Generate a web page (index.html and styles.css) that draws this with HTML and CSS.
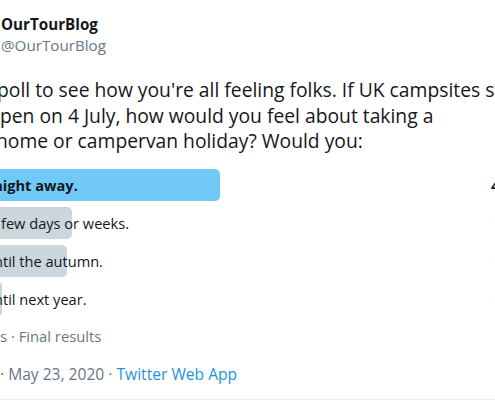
FILE: index.html
```html
<!DOCTYPE html>
<html lang="en">
<head>
<meta charset="utf-8">
<title>OurTourBlog poll</title>
<link rel="stylesheet" href="styles.css">
</head>
<body>
<div class="tweet">
  <div class="author">
    <div class="name">OurTourBlog</div>
    <div class="handle">@OurTourBlog</div>
  </div>
  <div class="text">
    <div class="line l1">poll to see how you're all feeling folks. If UK campsites start to</div>
    <div class="line l2">pen on 4 July, how would you feel about taking a</div>
    <div class="line l3">home or campervan holiday? Would you:</div>
  </div>
  <div class="poll">
    <div class="row">
      <div class="option">
        <div class="bar win" style="width: 220px"></div>
        <div class="label bold cut-a">aight away.</div>
      </div>
      <div class="pct bold">45%</div>
    </div>
    <div class="row">
      <div class="option">
        <div class="bar" style="width: 72px"></div>
        <div class="label cut-f">few days or weeks.</div>
      </div>
      <div class="pct light">12%</div>
    </div>
    <div class="row">
      <div class="option">
        <div class="bar" style="width: 67px"></div>
        <div class="label cut-n">ntil the autumn.</div>
      </div>
      <div class="pct light">11%</div>
    </div>
    <div class="row">
      <div class="option">
        <div class="bar" style="width: 2px"></div>
        <div class="label cut-n">ntil next year.</div>
      </div>
      <div class="pct light">1%</div>
    </div>
  </div>
  <div class="meta">s · Final results</div>
  <div class="time"><span>· May 23, 2020 · </span><a class="app" href="#">Twitter Web App</a></div>
</div>
</body>
</html>
```

FILE: styles.css
```css
html, body {
  margin: 0;
  padding: 0;
  background: #ffffff;
}
body {
  font-family: "Open Sans", "Noto Sans", sans-serif;
  color: #14171a;
  width: 495px;
  height: 400px;
  overflow: hidden;
}
.tweet {
  width: 495px;
  height: 400px;
  overflow: hidden;
  border-bottom: 1px solid #e6ecf0;
  box-sizing: border-box;
}
.author {
  padding-top: 13px;
  padding-left: 1px;
}
.name {
  font-weight: 700;
  font-size: 15.2px;
  line-height: 22px;
}
.handle {
  color: #657786;
  font-size: 15.2px;
  line-height: 20px;
}
.text {
  margin-top: 22px;
  font-size: 19.3px;
  line-height: 25.5px;
}
.line {
  white-space: nowrap;
}
.l1 { margin-left: -3px; }
.l2 { margin-left: 0; }
.l3 { margin-left: -4px; }
.poll {
  margin-top: 15px;
  display: flex;
  flex-direction: column;
  gap: 6px;
}
.row {
  display: grid;
  grid-template-columns: 491px 60px;
  align-items: center;
}
.option {
  display: grid;
  height: 32px;
  align-items: center;
}
.bar, .label {
  grid-area: 1 / 1;
}
.bar {
  height: 32px;
  background: #ccd6dd;
  border-radius: 0 5px 5px 0;
}
.bar.win {
  background: #71c9f8;
}
.label {
  font-size: 14.6px;
  white-space: nowrap;
}
.cut-a { margin-left: -6px; }
.cut-f { margin-left: 1px; }
.cut-n { margin-left: -6px; }
.bold { font-weight: 700; }
.pct {
  font-size: 15px;
}
.pct.light { color: #ccd6dd; margin-left: 2px; }
.meta {
  margin-top: 9px;
  color: #657786;
  font-size: 14.8px;
  line-height: 24px;
}
.time {
  margin-top: 14px;
  color: #657786;
  font-size: 15.6px;
  line-height: 24px;
  margin-left: 0;
}
.app {
  color: #1b95e0;
  text-decoration: none;
}
```
